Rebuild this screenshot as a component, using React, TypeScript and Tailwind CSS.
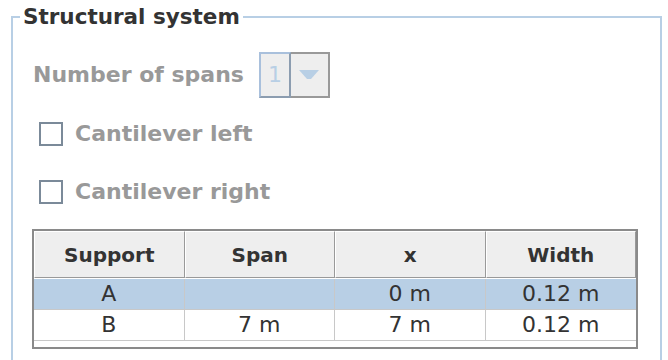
import React from 'react';

const font = { fontFamily: '"DejaVu Sans", Verdana, sans-serif' };

const rows = [
  { support: 'A', span: '', x: '0 m', width: '0.12 m', selected: true },
  { support: 'B', span: '7 m', x: '7 m', width: '0.12 m', selected: false },
];

const headers = ['Support', 'Span', 'x', 'Width'];

function Checkbox({ label }: { label: string }) {
  return (
    <div className="ml-[6px] flex h-[24px] items-center gap-[12px]">
      <div className="h-[24px] w-[24px] border-2 border-[#7b8a99] bg-white" />
      <span className="text-[22px] font-bold leading-none text-[#999999]">{label}</span>
    </div>
  );
}

export default function App() {
  return (
    <div className="h-[360px] w-[668px] overflow-hidden bg-white" style={font}>
      <fieldset className="ml-[11px] h-[420px] w-[651px] border-2 border-[#b8cfe5] pl-[20px] pr-[20px]">
        <legend className="ml-[-13px] px-[3px] text-[21.5px] font-bold leading-[34px] text-[#333333]">
          Structural system
        </legend>

        {/* Number of spans */}
        <div className="mt-[18px] flex h-[46px] items-center">
          <span className="text-[22px] font-bold leading-none text-[#999999]">Number of spans</span>
          <div className="ml-[15px] flex h-[46px]">
            <div className="flex h-full w-[32px] items-center justify-center border-2 border-[#a9c0dc] border-r-[#8c9db0] border-b-[#8c9db0] bg-[#eeeeee] text-[22px] leading-none text-[#b8cfe5]">
              1
            </div>
            <div className="flex h-full w-[39px] items-center justify-center border-2 border-l-0 border-[#999999] bg-[#eeeeee]">
              <svg width="20" height="10" viewBox="0 0 20 10">
                <polygon points="0,0 20,0 12,9 8,9" fill="#b8cfe5" />
              </svg>
            </div>
          </div>
        </div>

        <div className="mt-[24px]">
          <Checkbox label="Cantilever left" />
        </div>
        <div className="mt-[34px]">
          <Checkbox label="Cantilever right" />
        </div>

        {/* Supports table */}
        <div className="ml-[-1px] mt-[25px] w-[606px] border-2 border-[#8a8a8a] bg-white pb-[6px]">
          <div className="grid grid-cols-4 bg-[#eeeeee]">
            {headers.map((h) => (
              <div
                key={h}
                className="flex h-[47px] items-center justify-center border-l border-t border-r border-b border-l-white border-t-white border-r-[#999999] border-b-[#999999] text-[20px] font-bold text-[#333333]"
              >
                {h}
              </div>
            ))}
          </div>
          <div className="h-px bg-white" />
          {rows.map((r) => (
            <div
              key={r.support}
              className={`grid grid-cols-4 border-b border-[#c8c8c8] ${r.selected ? 'bg-[#b8cfe5]' : 'bg-white'}`}
            >
              {[r.support, r.span, r.x, r.width].map((v, i) => (
                <div
                  key={i}
                  className={`flex h-[30px] items-center justify-center text-[22px] leading-none text-[#333333] ${i < 3 ? 'border-r border-[#c8c8c8]' : ''}`}
                >
                  {v}
                </div>
              ))}
            </div>
          ))}
        </div>
      </fieldset>
    </div>
  );
}
